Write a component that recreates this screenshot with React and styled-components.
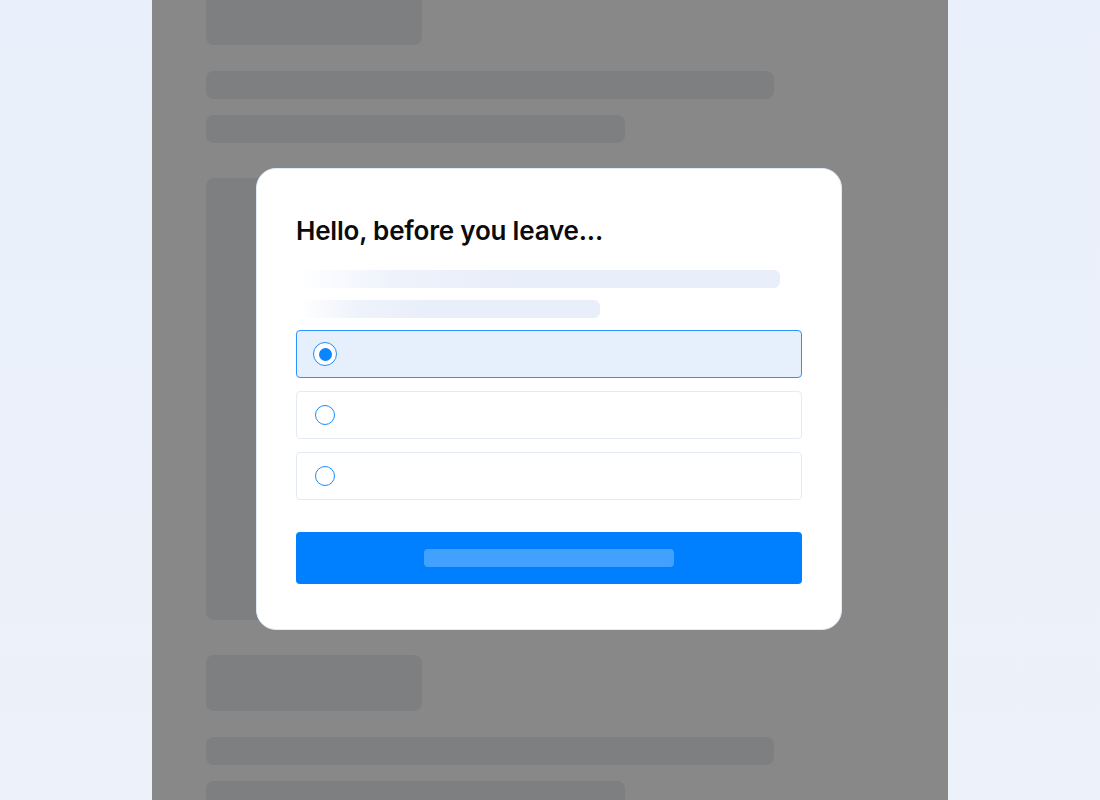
import React from "react";
import styled, { createGlobalStyle } from "styled-components";

const GlobalStyle = createGlobalStyle`
  html, body {
    margin: 0;
    padding: 0;
    height: 100%;
    overflow: hidden;
  }
  body {
    font-family: Inter, "Liberation Sans", sans-serif;
    background: linear-gradient(180deg, #eaf0fb 0%, #ebf0fa 60%, #edf1f9 100%);
  }
`;

const Stage = styled.div`
  position: relative;
  width: 1100px;
  height: 800px;
  display: flex;
  justify-content: center;
  overflow: hidden;
`;

const Column = styled.div`
  width: 796px;
  height: 800px;
  background: #888888;
  padding: 0 54px;
  box-sizing: border-box;
  overflow: hidden;
`;

const Feed = styled.div`
  display: flex;
  flex-direction: column;
  margin-top: -11px;
`;

const Block = styled.div`
  background: #7e7f80;
  border-radius: 8px;
  width: ${(p) => p.$w}px;
  height: ${(p) => p.$h}px;
  margin-top: ${(p) => p.$mt || 0}px;
  flex-shrink: 0;
`;

const Overlay = styled.div`
  position: absolute;
  inset: 0;
  display: flex;
  align-items: flex-start;
  justify-content: center;
  padding: 168px 2px 0 0;
`;

const Modal = styled.div`
  width: 586px;
  box-sizing: border-box;
  background: #ffffff;
  border: 1px solid #e2eafa;
  border-radius: 20px;
  padding: 46px 39px 45px;
  display: flex;
  flex-direction: column;
`;

const Title = styled.h1`
  margin: 0;
  font-size: 26px;
  line-height: 32px;
  font-weight: 600;
  color: #0b0b0c;
  letter-spacing: -0.2px;
`;

const Line = styled.div`
  height: 18px;
  border-radius: 6px;
  width: ${(p) => p.$w}px;
  margin-left: 4px;
  margin-top: ${(p) => p.$mt}px;
  background: linear-gradient(90deg, #ffffff 0%, #eef2fb 20%, #e8eefa 45%, #e8eefa 100%);
`;

const Options = styled.div`
  display: flex;
  flex-direction: column;
  gap: 13px;
  margin-top: 12px;
`;

const Option = styled.div`
  height: 48px;
  box-sizing: border-box;
  border-radius: 4px;
  border: 1px solid ${(p) => (p.$active ? "#2b93ff" : "#e4ebf7")};
  background: ${(p) => (p.$active ? "#e6effc" : "#ffffff")};
  display: flex;
  align-items: center;
  padding-left: 16px;
`;

const RadioSlot = styled.span`
  width: 24px;
  height: 24px;
  display: flex;
  align-items: center;
  justify-content: center;
`;

const Radio = styled.span`
  width: ${(p) => (p.$checked ? 24 : 20)}px;
  height: ${(p) => (p.$checked ? 24 : 20)}px;
  box-sizing: border-box;
  border-radius: 50%;
  border: 1.5px solid #1a8cff;
  background: #ffffff;
  display: flex;
  align-items: center;
  justify-content: center;

  &::after {
    content: "";
    display: ${(p) => (p.$checked ? "block" : "none")};
    width: 13px;
    height: 13px;
    border-radius: 50%;
    background: #0a84ff;
  }
`;

const Submit = styled.div`
  margin-top: 32px;
  height: 52px;
  border-radius: 4px;
  background: #0080ff;
  display: flex;
  align-items: center;
  justify-content: center;
`;

const SubmitLabel = styled.div`
  width: 250px;
  height: 18px;
  border-radius: 4px;
  background: #42a1ff;
`;

export default function App() {
  return (
    <>
      <GlobalStyle />
      <Stage>
        <Column>
          <Feed>
            <Block $w={216} $h={56} />
            <Block $w={568} $h={28} $mt={26} />
            <Block $w={419} $h={28} $mt={16} />
            <Block $w={568} $h={442} $mt={35} />
            <Block $w={216} $h={56} $mt={35} />
            <Block $w={568} $h={28} $mt={26} />
            <Block $w={419} $h={28} $mt={16} />
          </Feed>
        </Column>
        <Overlay>
          <Modal>
            <Title>Hello, before you leave...</Title>
            <Line $w={480} $mt={23} />
            <Line $w={300} $mt={12} />
            <Options>
              <Option $active>
                <RadioSlot>
                  <Radio $checked />
                </RadioSlot>
              </Option>
              <Option>
                <RadioSlot>
                  <Radio />
                </RadioSlot>
              </Option>
              <Option>
                <RadioSlot>
                  <Radio />
                </RadioSlot>
              </Option>
            </Options>
            <Submit>
              <SubmitLabel />
            </Submit>
          </Modal>
        </Overlay>
      </Stage>
    </>
  );
}
